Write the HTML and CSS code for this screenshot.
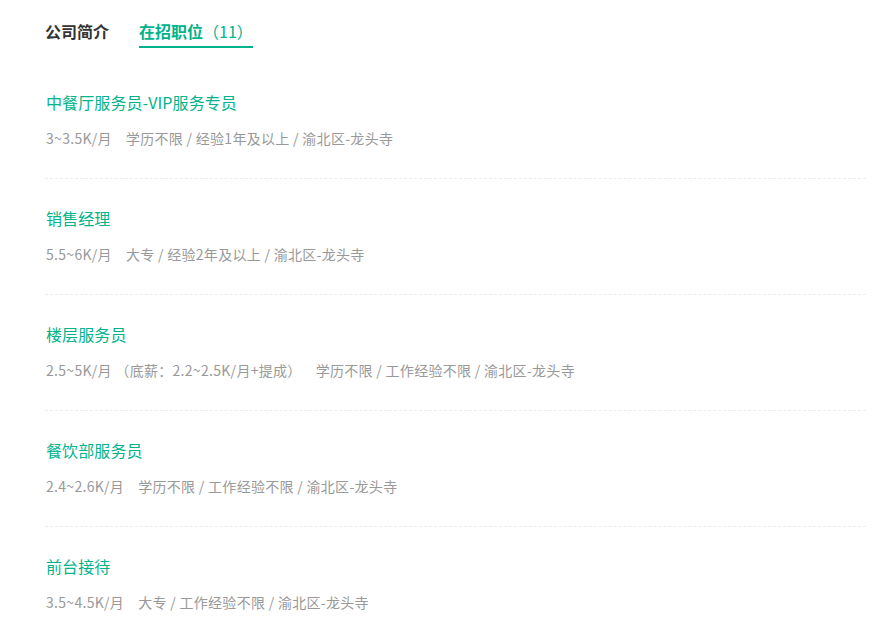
FILE: index.html
```html
<!DOCTYPE html>
<html lang="zh-CN">
<head>
    <meta charset="UTF-8">
    <meta name="viewport" content="width=device-width, initial-scale=1.0">
    <title>在招职位</title>
    <link rel="stylesheet" href="styles.css">
</head>
<body>

    <div class="container">
        <div class="tabs">
            <span class="tab">公司简介</span>
            <span class="tab active">在招职位<span class="count">（11）</span></span>
        </div>

        <ul class="jobs">
            <li class="job">
                <div class="job-name">中餐厅服务员-VIP服务专员</div>
                <div class="job-meta"><span class="salary">3~3.5K/月</span>学历不限 / 经验1年及以上 / 渝北区-龙头寺</div>
            </li>
            <li class="job">
                <div class="job-name">销售经理</div>
                <div class="job-meta"><span class="salary">5.5~6K/月</span>大专 / 经验2年及以上 / 渝北区-龙头寺</div>
            </li>
            <li class="job">
                <div class="job-name">楼层服务员</div>
                <div class="job-meta"><span class="salary">2.5~5K/月 （底薪：2.2~2.5K/月+提成）</span>学历不限 / 工作经验不限 / 渝北区-龙头寺</div>
            </li>
            <li class="job">
                <div class="job-name">餐饮部服务员</div>
                <div class="job-meta"><span class="salary">2.4~2.6K/月</span>学历不限 / 工作经验不限 / 渝北区-龙头寺</div>
            </li>
            <li class="job">
                <div class="job-name">前台接待</div>
                <div class="job-meta"><span class="salary">3.5~4.5K/月</span>大专 / 工作经验不限 / 渝北区-龙头寺</div>
            </li>
        </ul>
    </div>

</body>
</html>
```

FILE: styles.css
```css
body { margin: 0; background: #fff; font-family: "Noto Sans CJK SC", "Noto Sans", sans-serif; }
.container { width: 821px; padding-left: 45px; }

.tabs { display: flex; gap: 30px; padding-top: 19px; }
.tab { font-size: 16px; line-height: 24px; font-weight: bold; color: #333; padding-bottom: 3px; border-bottom: 2px solid transparent; }
.tab.active { color: #00b38a; border-bottom-color: #00b38a; }
.count { font-weight: normal; }

.jobs { list-style: none; margin: 15px 0 0; padding: 0; }
.job { padding: 28px 0 30px 1px; border-bottom: 1px dashed #ededed; }
.job-name { font-size: 16px; line-height: 22px; color: #00b38a; letter-spacing: 0.1px; }
.job-meta { margin-top: 15px; font-size: 14px; line-height: 20px; color: #999; letter-spacing: 0.3px; }
.salary { margin-right: 14px; }
```
